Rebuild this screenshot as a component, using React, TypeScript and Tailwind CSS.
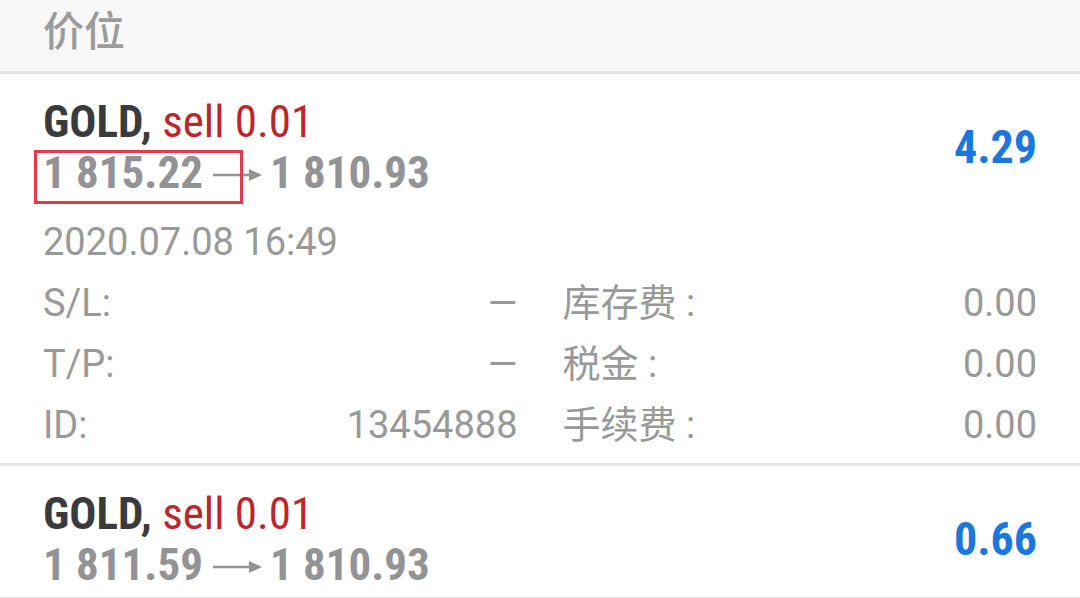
const body = '"Roboto", "Noto Sans CJK SC", sans-serif';
const cond = '"Roboto Condensed", "Liberation Sans Narrow", "DejaVu Sans Condensed", "Noto Sans CJK SC", sans-serif';

type Position = {
  open: string;
  current: string;
  profit: string;
  time?: string;
  sl?: string;
  tp?: string;
  id?: string;
  marked?: boolean;
};

const positions: Position[] = [
  {
    open: '1 815.22',
    current: '1 810.93',
    profit: '4.29',
    time: '2020.07.08 16:49',
    sl: '—',
    tp: '—',
    id: '13454888',
    marked: true,
  },
  { open: '1 811.59', current: '1 810.93', profit: '0.66' },
];

function Arrow() {
  return (
    <svg width="49" height="18" viewBox="0 0 49 18" className="inline-block ml-[10px] mr-[8px] align-[4px]">
      <line x1="0" y1="9" x2="38" y2="9" stroke="#939395" strokeWidth="2.5" />
      <path d="M36 3 L49 9 L36 15 Z" fill="#939395" />
    </svg>
  );
}

function Row({ label, value, label2, value2 }: { label: string; value: string; label2: string; value2: string }) {
  return (
    <div className="grid grid-cols-2 gap-x-[45px] h-[61px] leading-[61px] text-[38px] text-[#999999]">
      <div className="flex justify-between">
        <span>{label}</span>
        <span>{value}</span>
      </div>
      <div className="flex justify-between">
        <span>{label2}</span>
        <span>{value2}</span>
      </div>
    </div>
  );
}

function PositionCard({ p }: { p: Position }) {
  return (
    <div className="relative px-[43px] pt-[22px] pb-[7px] border-b-[3px] border-[#e6e6e6]">
      <div className="flex items-center justify-between" style={{ fontFamily: cond }}>
        <div className="text-[45px] leading-[51px] font-bold">
          <div>
            <span className="text-[#3b3b3d]">GOLD,</span>{' '}
            <span className="font-normal text-[#bd252b]">sell 0.01</span>
          </div>
          <div className="text-[#939395] whitespace-nowrap">
            <span>{p.open}</span>
            <Arrow />
            <span>{p.current}</span>
          </div>
        </div>
        <div className="text-[46px] font-bold text-[#1b77dc]">{p.profit}</div>
      </div>
      {p.time && (
        <div className="mt-[14px]">
          <div className="h-[61px] leading-[61px] text-[38px] text-[#999999]">{p.time}</div>
          <Row label="S/L:" value={p.sl ?? ''} label2="库存费 :" value2="0.00" />
          <Row label="T/P:" value={p.tp ?? ''} label2="税金 :" value2="0.00" />
          <Row label="ID:" value={p.id ?? ''} label2="手续费 :" value2="0.00" />
        </div>
      )}
      {p.marked && (
        <div className="absolute left-[34px] top-[76px] w-[209px] h-[54px] border-[3px] border-[#e33a4c]" />
      )}
    </div>
  );
}

export default function App() {
  return (
    <div className="w-[1080px] h-[598px] overflow-hidden bg-white" style={{ fontFamily: body }}>
      <div className="h-[74px] bg-[#f7f7f7] border-b-[3px] border-[#e4e4e4] flex items-center px-[43px] pb-[6px]">
        <span className="text-[41px] font-medium text-[#9b9b9b]">价位</span>
      </div>
      {positions.map((p, i) => (
        <PositionCard key={i} p={p} />
      ))}
    </div>
  );
}
